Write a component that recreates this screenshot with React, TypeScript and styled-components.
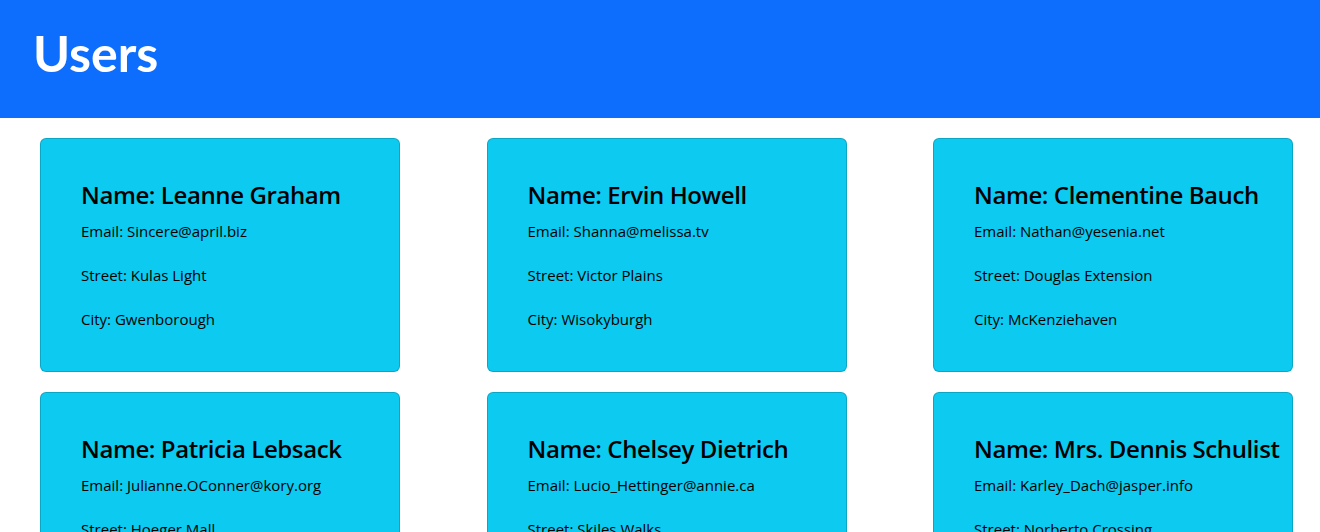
import React from "react";
import styled, { createGlobalStyle } from "styled-components";

const GlobalStyle = createGlobalStyle`
  html, body {
    margin: 0;
    padding: 0;
    background: #ffffff;
    font-family: "Open Sans", "Noto Sans", sans-serif;
    color: #000000;
  }
  * { box-sizing: border-box; }
`;

const Header = styled.header`
  background: #0d6efd;
  height: 118px;
  padding: 0 33px;
`;

const Title = styled.h1`
  margin: 0;
  padding-top: 23px;
  font-family: Lato, "Open Sans", sans-serif;
  font-size: 50px;
  line-height: 60px;
  font-weight: 700;
  color: #ffffff;
`;

const Grid = styled.main`
  display: grid;
  grid-template-columns: repeat(3, 360px);
  column-gap: 86.5px;
  row-gap: 20px;
  padding: 20px 0 20px 40px;
`;

const Card = styled.section`
  background: #0dcaf0;
  border: 1px solid rgba(0, 0, 0, 0.175);
  border-radius: 6px;
  height: 234px;
  padding: 41px 40px 0 40px;
`;

const Name = styled.h4`
  margin: 0 0 10px 0;
  font-size: 24px;
  line-height: 29px;
  font-weight: 600;
  letter-spacing: -0.4px;
  white-space: nowrap;
`;

const Field = styled.p`
  margin: 0 0 20px 0;
  font-size: 15px;
  line-height: 24px;
  white-space: nowrap;
`;

type User = { name: string; email: string; street: string; city: string };

const users: User[] = [
  { name: "Leanne Graham", email: "Sincere@april.biz", street: "Kulas Light", city: "Gwenborough" },
  { name: "Ervin Howell", email: "Shanna@melissa.tv", street: "Victor Plains", city: "Wisokyburgh" },
  { name: "Clementine Bauch", email: "Nathan@yesenia.net", street: "Douglas Extension", city: "McKenziehaven" },
  { name: "Patricia Lebsack", email: "Julianne.OConner@kory.org", street: "Hoeger Mall", city: "South Elvis" },
  { name: "Chelsey Dietrich", email: "Lucio_Hettinger@annie.ca", street: "Skiles Walks", city: "Roscoeview" },
  { name: "Mrs. Dennis Schulist", email: "Karley_Dach@jasper.info", street: "Norberto Crossing", city: "South Christy" },
  { name: "Kurtis Weissnat", email: "Telly.Hoeger@billy.biz", street: "Rex Trail", city: "Howemouth" },
  { name: "Nicholas Runolfsdottir V", email: "Sherwood@rosamond.me", street: "Ellsworth Summit", city: "Aliyaview" },
  { name: "Glenna Reichert", email: "Chaim_McDermott@dana.io", street: "Dayna Park", city: "Bartholomebury" },
  { name: "Clementina DuBuque", email: "Rey.Padberg@karina.biz", street: "Kattie Turnpike", city: "Lebsackbury" },
];

export default function App() {
  return (
    <>
      <GlobalStyle />
      <Header>
        <Title>Users</Title>
      </Header>
      <Grid>
        {users.map((u) => (
          <Card key={u.email}>
            <Name>Name: {u.name}</Name>
            <Field>Email: {u.email}</Field>
            <Field>Street: {u.street}</Field>
            <Field>City: {u.city}</Field>
          </Card>
        ))}
      </Grid>
    </>
  );
}
